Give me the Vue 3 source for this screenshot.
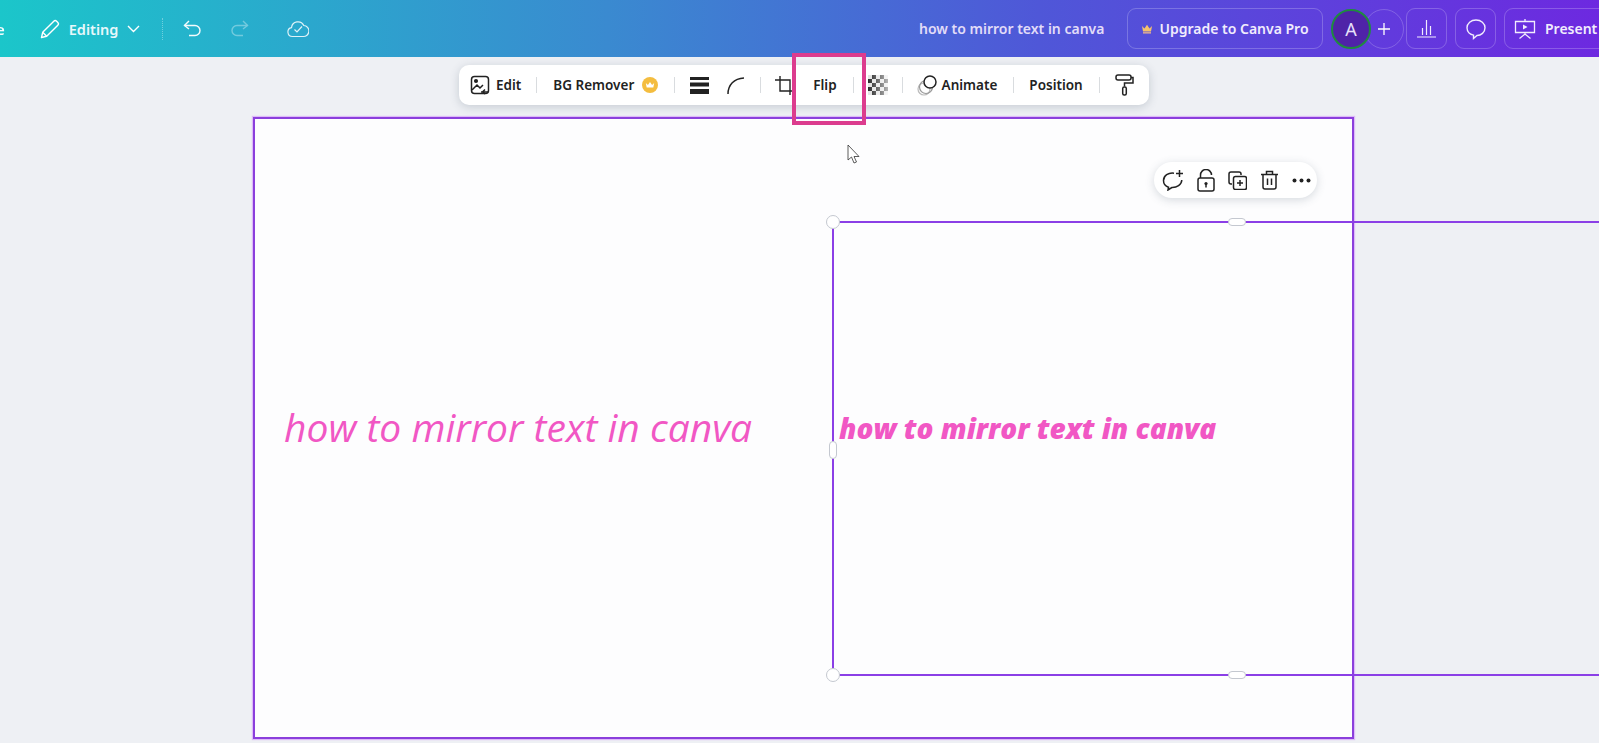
<script setup>
const title = 'how to mirror text in canva'
</script>

<template>
  <div class="page">
    <!-- top bar -->
    <header class="topbar">
      <div class="left-group">
        <span class="cut-word">e</span>
        <svg class="pencil" width="20" height="20" viewBox="0 0 20 20" fill="none" stroke="currentColor" stroke-width="1.4" stroke-linejoin="round">
          <path d="M1.5 18.5l1.2-5.2L13.8 2.2a2 2 0 0 1 2.8 0l1.2 1.2a2 2 0 0 1 0 2.8L6.7 17.3z" />
          <path d="M2.7 13.3l4 4" />
        </svg>
        <span class="editing">Editing</span>
        <svg class="chevron" width="13" height="8" viewBox="0 0 13 8" fill="none" stroke="currentColor" stroke-width="1.4">
          <path d="M1 1l5.5 5.5L12 1" />
        </svg>
        <span class="dot-line"></span>
        <svg class="undo" width="19" height="18" viewBox="0 0 19 18" fill="none" stroke="currentColor" stroke-width="1.4">
          <path d="M6 1L1.5 5.5 6 9" />
          <path d="M1.5 5.5h10.5a5 5 0 0 1 0 10H6" />
        </svg>
        <svg class="redo" width="19" height="18" viewBox="0 0 19 18" fill="none" stroke="currentColor" stroke-width="1.4">
          <path d="M13 1l4.500 4.500L13 9" />
          <path d="M17.500 5.500H7a5 5 0 0 0 0 10h6" />
        </svg>
        <svg class="cloud" width="22" height="19" viewBox="0 0 22 19" fill="none" stroke="currentColor" stroke-width="1.2">
          <path d="M5.500 17.500a4.500 4.500 0 0 1-1-8.900 6.500 6.500 0 0 1 12.300-2.100 5.500 5.500 0 0 1-.8 11z" />
          <path d="M7.500 10.500l2.500 2.500 5-5.500" />
        </svg>
      </div>

      <div class="right-group">
        <span class="doc-title">{{ title }}</span>
        <button class="top-btn upgrade">
          <svg width="12" height="10" viewBox="0 0 12 10">
            <path d="M1 2l2.500 2.500L6 .8l2.500 3.700L11 2l-1 5.500H2z" fill="#f5c26b" />
            <path d="M2 8.200h8v1.300H2z" fill="#f0b98a" />
          </svg>
          Upgrade to Canva Pro
        </button>
        <div class="people">
          <span class="add-person">
            <svg width="14" height="14" viewBox="0 0 14 14" stroke="currentColor" stroke-width="1.300">
              <path d="M7 1v12M1 7h12" />
            </svg>
          </span>
          <span class="avatar">A</span>
        </div>
        <button class="top-btn square">
          <svg width="21" height="19" viewBox="0 0 21 19" fill="none" stroke="currentColor" stroke-width="1.200">
            <path d="M1 18h19M6.500 16V9M10.500 16V1M14.500 16V7" />
          </svg>
        </button>
        <button class="top-btn square">
          <svg width="22" height="22" viewBox="0 0 22 22" fill="none" stroke="currentColor" stroke-width="1.400">
            <path d="M11 2c5 0 9 3.200 9 7.800s-4 7.700-8 7.700l-3.500 3v-3.400C5 16.500 2 13.700 2 9.800 2 5.200 6 2 11 2z" />
          </svg>
        </button>
        <button class="top-btn present">
          <svg width="22" height="21" viewBox="0 0 22 21" fill="none" stroke="currentColor" stroke-width="1.300">
            <path d="M1.500 3.500h19v11h-19zM11 1v2.500M11 14.500v1.500M5.500 20.500L11 16l5.500 4.500" />
            <path d="M9 6.500l4.500 2.500L9 11.500z" fill="currentColor" stroke="none" />
          </svg>
          <span>Present</span>
        </button>
      </div>
    </header>

    <!-- context toolbar -->
    <div class="toolbar">
      <svg class="tb-edit" width="20" height="20" viewBox="0 0 20 20" fill="none" stroke="#222" stroke-width="1.500">
        <rect x="1.500" y="1.500" width="17" height="17" rx="3" />
        <circle cx="6" cy="6" r="1.300" fill="#222" />
        <path d="M2 15l5-5 3 3 3-3M11 17h7M15 14.500L12.500 17l2.500 2" />
      </svg>
      <span class="tb-label tb-label-edit">Edit</span>
      <i class="sep sep-a"></i>
      <span class="tb-label">BG Remover</span>
      <span class="crown-badge">
        <svg width="10" height="9" viewBox="0 0 12 10" fill="#fff">
          <path d="M1 2l2.500 2.500L6 .8l2.500 3.700L11 2l-1 5.500H2z" />
        </svg>
      </span>
      <i class="sep sep-b"></i>
      <svg class="tb-lines" width="19" height="17" viewBox="0 0 19 17" fill="#222">
        <path d="M0 0h19v3H0zM0 5.500h19v4H0zM0 12h19v5H0z" />
      </svg>
      <svg class="tb-corner" width="17" height="17" viewBox="0 0 17 17" fill="none" stroke="#222" stroke-width="1.500">
        <path d="M1 17C1 8 7 1.500 17 1" />
      </svg>
      <i class="sep sep-c"></i>
      <svg class="tb-crop" width="18" height="19" viewBox="0 0 18 19" fill="none" stroke="#222" stroke-width="1.400">
        <path d="M5 0v15h13M0 4h15v15" />
      </svg>
      <span class="tb-label tb-flip">Flip</span>
      <i class="sep sep-d"></i>
      <span class="checker"></span>
      <i class="sep sep-e"></i>
      <svg class="tb-animate" width="21" height="21" viewBox="0 0 21 21" fill="none">
        <circle cx="8" cy="14" r="6" stroke="#bbb" stroke-width="1.200" />
        <circle cx="10" cy="12" r="6.500" stroke="#999" stroke-width="1.200" />
        <circle cx="14" cy="7" r="6" fill="#fff" stroke="#222" stroke-width="1.500" />
      </svg>
      <span class="tb-label tb-animate-label">Animate</span>
      <i class="sep sep-f"></i>
      <span class="tb-label">Position</span>
      <i class="sep sep-g"></i>
      <svg class="tb-roller" width="19" height="22" viewBox="0 0 19 22" fill="none" stroke="#222" stroke-width="1.500">
        <rect x="1" y="1" width="15" height="5" rx="2" />
        <path d="M16 3.500h2v5.500H9.500v3.500" />
        <rect x="7.700" y="13" width="3.600" height="8" rx="1.500" />
      </svg>
    </div>

    <!-- design page -->
    <div class="canvas">
      <span class="text-light">{{ title }}</span>
      <span class="text-bold">{{ title }}</span>

      <div class="selection">
        <span class="corner corner-top"></span>
        <span class="corner corner-bottom"></span>
        <span class="pill-h pill-top"></span>
        <span class="pill-h pill-bottom"></span>
        <span class="pill-v"></span>
      </div>

      <div class="mini-bar">
        <svg width="22" height="22" viewBox="0 0 22 22" fill="none" stroke="#222" stroke-width="1.500">
          <path d="M12 4.200C6.500 3.500 1.500 6.500 1.500 11.500c0 3.300 2 5.800 5 6.700l-.5 2.800 3.800-2.500c5 .2 9.700-2.500 10-7.500" />
          <path d="M17.500 1v7M14 4.500h7" />
        </svg>
        <svg width="18" height="23" viewBox="0 0 18 23" fill="none" stroke="#222" stroke-width="1.500">
          <rect x="1" y="9" width="16" height="13" rx="2" />
          <path d="M3.500 9V6a5.500 5.500 0 0 1 11 0" />
          <circle cx="9" cy="14.500" r="1.600" fill="#222" stroke="none" />
          <path d="M9 15v3.500" />
        </svg>
        <svg width="19" height="19" viewBox="0 0 19 19" fill="none" stroke="#222" stroke-width="1.500">
          <path d="M4 13H3a2 2 0 0 1-2-2V3a2 2 0 0 1 2-2h8a2 2 0 0 1 2 2v1" />
          <rect x="5.500" y="5.500" width="13" height="13" rx="2" />
          <path d="M12 9v6M9 12h6" />
        </svg>
        <svg width="19" height="20" viewBox="0 0 19 20" fill="none" stroke="#222" stroke-width="1.500">
          <path d="M1 4.500h17M3 4.500V17a2 2 0 0 0 2 2h9a2 2 0 0 0 2-2V4.500M6.500 4.500V1.500h6v3M7.500 8.500V15M11.500 8.500V15" />
        </svg>
        <svg width="19" height="5" viewBox="0 0 19 5" fill="#222">
          <circle cx="2.500" cy="2.500" r="2" />
          <circle cx="9.500" cy="2.500" r="2" />
          <circle cx="16.500" cy="2.500" r="2" />
        </svg>
      </div>

      <svg class="cursor" width="13" height="21" viewBox="0 0 13 21" fill="#fff" stroke="#333" stroke-width="0.800">
        <path d="M1 1v15l3.500-3 2.500 6 2.500-1-2.500-5.500H12z" />
      </svg>
    </div>

    <!-- highlight drawn on top of the toolbar -->
    <div class="flip-mark"></div>
  </div>
</template>

<style scoped>
.page {
  position: relative;
  width: 1599px;
  height: 743px;
  overflow: hidden;
  background: #eef0f4;
  font-family: "Noto Sans", "Open Sans", sans-serif;
}

.topbar {
  display: flex;
  align-items: center;
  height: 57px;
  color: #fff;
  background: linear-gradient(90deg, #1bc6ca 0%, #3a8ad0 38%, #4f57d8 65%, #6d29e0 100%);
}

.left-group {
  display: flex;
  align-items: center;
  width: 919px;
  flex: none;
}

.cut-word {
  margin-left: -4px;
  font-size: 15px;
  font-weight: 600;
  opacity: 0.95;
}

.pencil {
  margin-left: 35px;
}

.editing {
  margin-left: 9px;
  font-size: 14.500px;
  font-weight: 600;
  color: #e8f8fb;
}

.chevron {
  margin-left: 9px;
}

.dot-line {
  height: 22px;
  margin: 0 20px 0 22px;
  border-left: 1px dotted rgba(255, 255, 255, 0.35);
}

.undo {
  opacity: 0.95;
}

.redo {
  margin-left: 28px;
  opacity: 0.35;
}

.cloud {
  margin-left: 38px;
  opacity: 0.85;
}

.right-group {
  display: flex;
  align-items: center;
  flex: none;
}

.doc-title {
  width: 208px;
  flex: none;
  font-size: 14px;
  font-weight: 600;
  color: #e2dcf8;
  white-space: nowrap;
}

.top-btn {
  display: flex;
  align-items: center;
  justify-content: center;
  height: 41px;
  padding: 0;
  border: 1px solid rgba(255, 255, 255, 0.22);
  border-radius: 9px;
  background: transparent;
  color: #f1ecfd;
  font-family: inherit;
  font-weight: 600;
}

.upgrade {
  gap: 6px;
  width: 196px;
  font-size: 14px;
}

.people {
  position: relative;
  display: flex;
  align-items: center;
  width: 75px;
  margin-left: 8px;
  height: 41px;
}

.avatar {
  position: absolute;
  left: 0;
  display: flex;
  align-items: center;
  justify-content: center;
  width: 36px;
  height: 36px;
  border: 2px solid #1f8a3f;
  border-radius: 50%;
  background: #4f23a8;
  color: #e8e0fa;
  font-size: 18px;
}

.add-person {
  position: absolute;
  left: 33px;
  display: flex;
  align-items: center;
  justify-content: center;
  width: 38px;
  height: 38px;
  border: 1px solid rgba(255, 255, 255, 0.2);
  border-radius: 50%;
}

.square {
  width: 41px;
  margin-right: 8px;
}

.square:first-of-type {
  margin-left: 4px;
}

.present {
  justify-content: flex-start;
  gap: 9px;
  width: 110px;
  padding-left: 9px;
  font-size: 14px;
}

.toolbar {
  display: flex;
  align-items: center;
  width: 690px;
  height: 40px;
  margin: 8px 0 12px 459px;
  box-sizing: border-box;
  padding-left: 11px;
  border-radius: 10px;
  background: #fff;
  box-shadow: 0 2px 10px rgba(57, 76, 96, 0.22);
}

.tb-label {
  font-size: 13.500px;
  font-weight: 600;
  color: #222;
  white-space: nowrap;
}

.tb-label-edit {
  margin-left: 6px;
}

.sep {
  width: 1px;
  height: 16px;
  flex: none;
  background: #d9dcdf;
}

.sep-a {
  margin: 0 16px 0 15px;
}

.crown-badge {
  display: flex;
  align-items: center;
  justify-content: center;
  width: 16px;
  height: 16px;
  margin-left: 8px;
  border-radius: 50%;
  background: #f4bd3f;
}

.sep-b {
  margin: 0 15px 0 16px;
}

.tb-corner {
  margin-left: 18px;
}

.sep-c {
  margin: 0 14px 0 16px;
}

.tb-flip {
  margin-left: 20px;
}

.sep-d {
  margin: 0 14px 0 16px;
}

.checker {
  width: 20px;
  height: 20px;
  flex: none;
  background: repeating-conic-gradient(#2a2a2a 0 25%, #e3e3e3 0 50%) 0 0 / 8px 8px;
  -webkit-mask-image: linear-gradient(90deg, #000, rgba(0, 0, 0, 0.35));
  mask-image: linear-gradient(90deg, #000, rgba(0, 0, 0, 0.35));
}

.sep-e {
  margin: 0 13px 0 14px;
}

.tb-animate-label {
  margin-left: 5px;
}

.sep-f {
  margin: 0 15px 0 16px;
}

.sep-g {
  margin: 0 15px 0 16px;
}

/* the page itself, items inside sit freely on it */
.canvas {
  position: relative;
  width: 1101px;
  height: 622px;
  margin-left: 253px;
  box-sizing: border-box;
  border: 2px solid #8b3fdc;
  background: #fdfdfe;
  box-shadow: 0 0 1px 1px rgba(200, 120, 255, 0.45);
}

.text-light,
.text-bold {
  position: absolute;
  color: #f157c4;
  font-style: italic;
  white-space: nowrap;
}

.text-light {
  left: 29px;
  top: 281px;
  font-family: "Open Sans", sans-serif;
  font-size: 39px;
  line-height: 54px;
}

.text-bold {
  left: 584px;
  top: 289px;
  font-family: "Open Sans", sans-serif;
  font-size: 28px;
  font-weight: 800;
  line-height: 40px;
}

.selection {
  position: absolute;
  left: 577px;
  top: 102px;
  width: 900px;
  height: 455px;
  box-sizing: border-box;
  border: 2px solid #8b3fe6;
}

.corner {
  position: absolute;
  left: -8px;
  width: 14px;
  height: 14px;
  box-sizing: border-box;
  border: 1px solid #c4c8d0;
  border-radius: 50%;
  background: #fff;
}

.corner-top {
  top: -8px;
}

.corner-bottom {
  bottom: -8px;
}

.pill-h {
  position: absolute;
  left: 394px;
  width: 18px;
  height: 8px;
  box-sizing: border-box;
  border: 1px solid #c4c8d0;
  border-radius: 4px;
  background: #fff;
}

.pill-top {
  top: -5px;
}

.pill-bottom {
  bottom: -5px;
}

.pill-v {
  position: absolute;
  left: -5px;
  top: 218px;
  width: 8px;
  height: 18px;
  box-sizing: border-box;
  border: 1px solid #c4c8d0;
  border-radius: 4px;
  background: #fff;
}

.mini-bar {
  position: absolute;
  left: 899px;
  top: 43px;
  display: flex;
  align-items: center;
  gap: 13px;
  width: 163px;
  height: 36px;
  box-sizing: border-box;
  padding-left: 8px;
  border-radius: 18px;
  background: #fff;
  box-shadow: 0 2px 10px rgba(57, 76, 96, 0.2);
}

.cursor {
  position: absolute;
  left: 592px;
  top: 25px;
}

.flip-mark {
  position: absolute;
  left: 792px;
  top: 53px;
  width: 74px;
  height: 72px;
  box-sizing: border-box;
  border: 4px solid #dc3c8e;
}
</style>

<style>
html,
body {
  margin: 0;
  overflow: hidden;
}
</style>
